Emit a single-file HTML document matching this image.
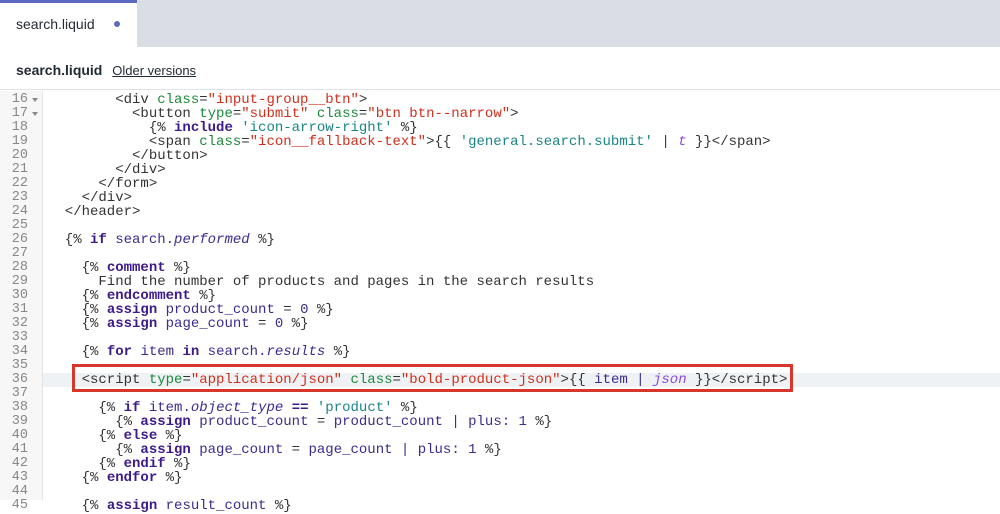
<!DOCTYPE html>
<html><head><meta charset="utf-8"><style>
*{margin:0;padding:0;box-sizing:border-box}
body{width:1000px;height:500px;overflow:hidden;background:#fff;font-family:"Liberation Sans",sans-serif;position:relative}
.tabs{position:absolute;left:0;top:0;width:1000px;height:47px;background:#dadde4}
.tab{position:absolute;left:0;top:0;width:137px;height:47px;background:#fff;border-top:3px solid #5c6ac4;font-size:14px;color:#212b36;padding:13px 0 0 16px}
.dot{position:absolute;left:114px;top:21px;width:6px;height:6px;border-radius:50%;background:#5c6ac4}
.bar{position:absolute;left:0;top:47px;width:1000px;height:43px;border-bottom:1px solid #dfe3e8;font-size:14px;padding:15px 0 0 16px;color:#212b36}
.bar b{font-weight:bold}
.bar u{margin-left:6px;font-size:13px}
.gut{position:absolute;left:0;top:91px;width:43px;height:409px;background:#f7f7f7;border-right:1px solid #e3e3e3}
.code{position:absolute;left:0;top:93px;width:1000px;font-family:"Liberation Mono",monospace;font-size:14px;line-height:14px;color:#333}
.l{height:14px;position:relative;white-space:pre}
.n{position:absolute;left:0;width:28px;text-align:right;color:#888;font-size:13.5px}
.ar{position:absolute;left:32px;top:5px;width:0;height:0;border-left:3.5px solid transparent;border-right:3.5px solid transparent;border-top:4px solid #888}
.t{position:absolute;left:48px}
.hl{background:#eff2f5;left:43px;right:0;position:absolute;top:0;height:14px}
.a{color:#1b8a3a}.s{color:#d12f1b}.k{color:#3d1a8a;font-weight:bold}.v{color:#3d2b8f}.q{color:#1a8585}.f{color:#8a4be0;font-style:italic}.p{color:#3d2b8f}
.box{position:absolute;left:72px;top:364px;width:721px;height:28px;border:3.5px solid #d9362b}
</style></head><body>
<div class="tabs"><div class="tab">search.liquid</div><div class="dot"></div></div>
<div class="bar"><b>search.liquid</b> <u>Older versions</u></div>
<div class="gut"></div>
<div class="code">
<div class="l"><span class="n">16</span><span class="ar"></span><span class="t">        &lt;div <span class="a">class</span>=<span class="s">"input-group__btn"</span>&gt;</span></div>
<div class="l"><span class="n">17</span><span class="ar"></span><span class="t">          &lt;button <span class="a">type</span>=<span class="s">"submit"</span> <span class="a">class</span>=<span class="s">"btn btn--narrow"</span>&gt;</span></div>
<div class="l"><span class="n">18</span><span class="t">            {% <span class="k">include</span> <span class="q">'icon-arrow-right'</span> %}</span></div>
<div class="l"><span class="n">19</span><span class="t">            &lt;span <span class="a">class</span>=<span class="s">"icon__fallback-text"</span>&gt;{{ <span class="q">'general.search.submit'</span> <span class="p">|</span> <span class="f">t</span> }}&lt;/span&gt;</span></div>
<div class="l"><span class="n">20</span><span class="t">          &lt;/button&gt;</span></div>
<div class="l"><span class="n">21</span><span class="t">        &lt;/div&gt;</span></div>
<div class="l"><span class="n">22</span><span class="t">      &lt;/form&gt;</span></div>
<div class="l"><span class="n">23</span><span class="t">    &lt;/div&gt;</span></div>
<div class="l"><span class="n">24</span><span class="t">  &lt;/header&gt;</span></div>
<div class="l"><span class="n">25</span></div>
<div class="l"><span class="n">26</span><span class="t">  {% <span class="k">if</span> <span class="v">search.<i>performed</i></span> %}</span></div>
<div class="l"><span class="n">27</span></div>
<div class="l"><span class="n">28</span><span class="t">    {% <span class="k">comment</span> %}</span></div>
<div class="l"><span class="n">29</span><span class="t">      Find the number of products and pages in the search results</span></div>
<div class="l"><span class="n">30</span><span class="t">    {% <span class="k">endcomment</span> %}</span></div>
<div class="l"><span class="n">31</span><span class="t">    {% <span class="k">assign</span> <span class="v">product_count</span> = <span class="v">0</span> %}</span></div>
<div class="l"><span class="n">32</span><span class="t">    {% <span class="k">assign</span> <span class="v">page_count</span> = <span class="v">0</span> %}</span></div>
<div class="l"><span class="n">33</span></div>
<div class="l"><span class="n">34</span><span class="t">    {% <span class="k">for</span> <span class="v">item</span> <span class="k">in</span> <span class="v">search.<i>results</i></span> %}</span></div>
<div class="l"><span class="n">35</span></div>
<div class="l"><span class="hl"></span><span class="n">36</span><span class="t">    &lt;script <span class="a">type</span>=<span class="s">"application/json"</span> <span class="a">class</span>=<span class="s">"bold-product-json"</span>&gt;{{ <span class="v">item</span> <span class="p">|</span> <span class="f">json</span> }}&lt;/script&gt;</span></div>
<div class="l"><span class="n">37</span></div>
<div class="l"><span class="n">38</span><span class="t">      {% <span class="k">if</span> <span class="v">item.<i>object_type</i></span> <span class="k">==</span> <span class="q">'product'</span> %}</span></div>
<div class="l"><span class="n">39</span><span class="t">        {% <span class="k">assign</span> <span class="v">product_count</span> = <span class="v">product_count</span> <span class="p">|</span> <span class="v">plus: 1</span> %}</span></div>
<div class="l"><span class="n">40</span><span class="t">      {% <span class="k">else</span> %}</span></div>
<div class="l"><span class="n">41</span><span class="t">        {% <span class="k">assign</span> <span class="v">page_count</span> = <span class="v">page_count</span> <span class="p">|</span> <span class="v">plus: 1</span> %}</span></div>
<div class="l"><span class="n">42</span><span class="t">      {% <span class="k">endif</span> %}</span></div>
<div class="l"><span class="n">43</span><span class="t">    {% <span class="k">endfor</span> %}</span></div>
<div class="l"><span class="n">44</span></div>
<div class="l"><span class="n">45</span><span class="t">    {% <span class="k">assign</span> <span class="v">result_count</span> %}</span></div>
</div>
<div class="box"></div>
</body></html>
